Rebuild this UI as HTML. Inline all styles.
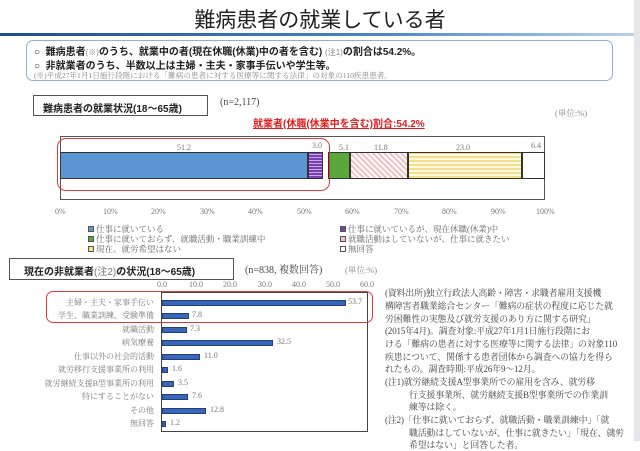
<!DOCTYPE html>
<html><head><meta charset="utf-8"><style>
*{margin:0;padding:0;box-sizing:border-box}
body{width:640px;height:441px;background:#fff;position:relative;overflow:hidden;font-family:"Liberation Sans","Noto Sans CJK JP",sans-serif;color:#222}
.a{position:absolute;white-space:nowrap}
.s{font-family:"Liberation Serif","Noto Serif CJK SC",serif}
.g{color:#666}
.lab{position:absolute;right:486px;font-size:8px;color:#777;font-family:"Liberation Serif","Noto Serif CJK SC",serif;white-space:nowrap}
.bar{position:absolute;left:162px;height:6px;background:#3a66b8;border:1px solid #1f3f80}
.val{position:absolute;font-size:8px;color:#777;font-family:"Liberation Serif",serif}
.lg{position:absolute;font-size:8.5px;color:#666;font-family:"Liberation Serif","Noto Serif CJK SC",serif;white-space:nowrap}
.lg i{display:inline-block;width:6px;height:6px;margin-right:2px;vertical-align:0;border:1px solid #555}
.r{position:absolute;left:385px;font-size:8.9px;color:#444;font-family:"Liberation Serif","Noto Serif CJK SC",serif;white-space:nowrap;letter-spacing:-0.1px}
</style></head><body>
<div class="a" style="left:0;width:640px;top:4px;text-align:center;font-size:21px;color:#222">難病患者の就業している者</div>
<div class="a" style="left:0;top:33px;width:634px;height:3px;background:linear-gradient(90deg,#1d4e8f,#4b86c8 60%,#b8d2ee)"></div>
<div class="a" style="left:634px;top:0;width:6px;height:441px;background:#e4e6ea"></div>

<div class="a" style="left:26px;top:40px;width:587px;height:41px;border:1px solid #8fb0d8;border-radius:7px"></div>
<div class="a" style="left:34px;top:43px;font-size:10px;font-weight:bold;color:#222">○&nbsp; 難病患者<span style="font-weight:normal;color:#888;font-size:8px">(※)</span>のうち、就業中の者(現在休職(休業)中の者を含む) <span style="font-weight:normal;color:#888;font-size:8px">(注1)</span>の割合は54.2%。</div>
<div class="a" style="left:34px;top:57px;font-size:10px;font-weight:bold;color:#222">○&nbsp; 非就業者のうち、半数以上は主婦・主夫・家事手伝いや学生等。</div>
<div class="a s g" style="left:34px;top:70px;font-size:7.6px;color:#888">(※)平成27年1月1日施行段階における「難病の患者に対する医療等に関する法律」の対象の110疾患患者。</div>

<div class="a" style="left:33px;top:95px;width:175px;height:21px;border:1px solid #555;font-size:10px;font-weight:bold;padding:4px 0 0 9px">難病患者の就業状況(18～65歳)</div>
<div class="a s" style="left:220px;top:97px;font-size:10px;color:#444">(n=2,117)</div>
<div class="a s g" style="left:555px;top:107px;font-size:8.5px;color:#888">(単位:%)</div>
<div class="a" style="left:253px;top:115px;font-size:10px;font-weight:bold;color:#e02020;text-decoration:underline">就業者(休職(休業中を含む)割合:54.2%</div>

<div class="a" style="left:60px;top:136px;width:485px;height:64px;border:1px solid #555"></div>
<div class="a" style="left:60px;top:152px;width:248px;height:27px;background:#5b96d2;border:1px solid #333"></div>
<div class="a" style="left:308px;top:152px;width:15px;height:27px;background:repeating-linear-gradient(0deg,#7a3fb0 0 2px,#c9a8ea 2px 3px);border:1px solid #333"></div>
<div class="a" style="left:328px;top:152px;width:22px;height:27px;background:#58a83c;border:1px solid #333"></div>
<div class="a" style="left:350px;top:152px;width:58px;height:27px;background:repeating-linear-gradient(45deg,#f7c0c0 0 2px,#fff 2px 4px);border:1px solid #333"></div>
<div class="a" style="left:408px;top:152px;width:114px;height:27px;background:repeating-linear-gradient(0deg,#f5e08a 0 2px,#fffbe6 2px 4px);border:1px solid #333"></div>
<div class="a" style="left:522px;top:152px;width:23px;height:27px;background:#fff;border:1px solid #333"></div>
<div class="a" style="left:57px;top:138px;width:273px;height:53px;border:1.5px solid #e03a3a;border-radius:9px"></div>
<div class="val" style="left:177px;top:143px">51.2</div>
<div class="val" style="left:312px;top:141px">3.0</div>
<div class="val" style="left:339px;top:143px">5.1</div>
<div class="val" style="left:374px;top:143px">11.8</div>
<div class="val" style="left:456px;top:143px">23.0</div>
<div class="val" style="left:531px;top:141px">6.4</div>
<div class="val" style="left:55px;top:207px">0%</div>
<div class="val" style="left:103px;top:207px">10%</div>
<div class="val" style="left:151px;top:207px">20%</div>
<div class="val" style="left:200px;top:207px">30%</div>
<div class="val" style="left:248px;top:207px">40%</div>
<div class="val" style="left:297px;top:207px">50%</div>
<div class="val" style="left:345px;top:207px">60%</div>
<div class="val" style="left:394px;top:207px">70%</div>
<div class="val" style="left:442px;top:207px">80%</div>
<div class="val" style="left:491px;top:207px">90%</div>
<div class="val" style="left:536px;top:207px">100%</div>
<div class="lg" style="left:88px;top:223px"><i style="background:#5b96d2"></i>仕事に就いている</div>
<div class="lg" style="left:340px;top:223px"><i style="background:#7a3fb0"></i>仕事に就いているが、現在休職(休業)中</div>
<div class="lg" style="left:88px;top:233px"><i style="background:#58a83c"></i>仕事に就いておらず、就職活動・職業訓練中</div>
<div class="lg" style="left:340px;top:233px"><i style="background:#f7c0c0"></i>就職活動はしていないが、仕事に就きたい</div>
<div class="lg" style="left:88px;top:243px"><i style="background:#f5e08a"></i>現在、就労希望はない</div>
<div class="lg" style="left:340px;top:243px"><i style="background:#fff"></i>無回答</div>

<div class="a" style="left:9px;top:258px;width:225px;height:22px;border:1px solid #555;font-size:10px;font-weight:bold;padding:4px 0 0 14px">現在の非就業者<span style="font-weight:normal;color:#777">(注2)</span>の状況(18～65歳)</div>
<div class="a s" style="left:245px;top:261px;font-size:10px;color:#444">(n=838, 複数回答)</div>
<div class="a s" style="left:345px;top:264px;font-size:8.5px;color:#888">(単位:%)</div>

<div class="val" style="left:157px;top:280px">0.0</div>
<div class="val" style="left:189px;top:280px">10.0</div>
<div class="val" style="left:223px;top:280px">20.0</div>
<div class="val" style="left:258px;top:280px">30.0</div>
<div class="val" style="left:292px;top:280px">40.0</div>
<div class="val" style="left:326px;top:280px">50.0</div>
<div class="val" style="left:360px;top:280px">60.0</div>
<div class="a" style="left:161px;top:292px;width:207px;height:140px;border:1px solid #444"></div>

<div class="lab" style="top:297px">主婦・主夫・家事手伝い</div><div class="bar" style="top:300px;width:184px"></div><div class="val" style="left:348px;top:297px">53.7</div>
<div class="lab" style="top:310px">学生、職業訓練、受験準備</div><div class="bar" style="top:313px;width:27px"></div><div class="val" style="left:192px;top:310px">7.8</div>
<div class="lab" style="top:324px">就職活動</div><div class="bar" style="top:327px;width:25px"></div><div class="val" style="left:190px;top:324px">7.3</div>
<div class="lab" style="top:337px">病気療養</div><div class="bar" style="top:340px;width:111px"></div><div class="val" style="left:277px;top:337px">32.5</div>
<div class="lab" style="top:351px">仕事以外の社会的活動</div><div class="bar" style="top:354px;width:38px"></div><div class="val" style="left:204px;top:351px">11.0</div>
<div class="lab" style="top:364px">就労移行支援事業所の利用</div><div class="bar" style="top:367px;width:6px"></div><div class="val" style="left:172px;top:364px">1.6</div>
<div class="lab" style="top:378px">就労継続支援B型事業所の利用</div><div class="bar" style="top:381px;width:12px"></div><div class="val" style="left:178px;top:378px">3.5</div>
<div class="lab" style="top:391px">特にすることがない</div><div class="bar" style="top:394px;width:26px"></div><div class="val" style="left:192px;top:391px">7.6</div>
<div class="lab" style="top:405px">その他</div><div class="bar" style="top:408px;width:44px"></div><div class="val" style="left:210px;top:405px">12.8</div>
<div class="lab" style="top:418px">無回答</div><div class="bar" style="top:421px;width:4px"></div><div class="val" style="left:170px;top:418px">1.2</div>
<div class="a" style="left:46px;top:291px;width:327px;height:32px;border:1.5px solid #e03a3a;border-radius:7px"></div>

<div class="r" style="top:286px">(資料出所)独立行政法人高齢・障害・求職者雇用支援機</div>
<div class="r" style="top:299px">構障害者職業総合センター「難病の症状の程度に応じた就</div>
<div class="r" style="top:312px">労困難性の実態及び就労支援のあり方に関する研究」</div>
<div class="r" style="top:324px">(2015年4月)。調査対象:平成27年1月1日施行段階にお</div>
<div class="r" style="top:337px">ける「難病の患者に対する医療等に関する法律」の対象110</div>
<div class="r" style="top:350px">疾患について、関係する患者団体から調査への協力を得ら</div>
<div class="r" style="top:362px">れたもの。調査時期:平成26年9～12月。</div>
<div class="r" style="top:375px">(注1)就労継続支援A型事業所での雇用を含み、就労移</div>
<div class="r" style="top:388px;left:409px">行支援事業所、就労継続支援B型事業所での作業訓</div>
<div class="r" style="top:400px;left:409px">練等は除く。</div>
<div class="r" style="top:413px">(注2)「仕事に就いておらず、就職活動・職業訓練中」「就</div>
<div class="r" style="top:426px;left:409px">職活動はしていないが、仕事に就きたい」「現在、就労</div>
<div class="r" style="top:438px;left:409px">希望はない」と回答した者。</div>
<div class="a s" style="left:612px;top:428px;font-size:8px;color:#888">14</div>
</body></html>
